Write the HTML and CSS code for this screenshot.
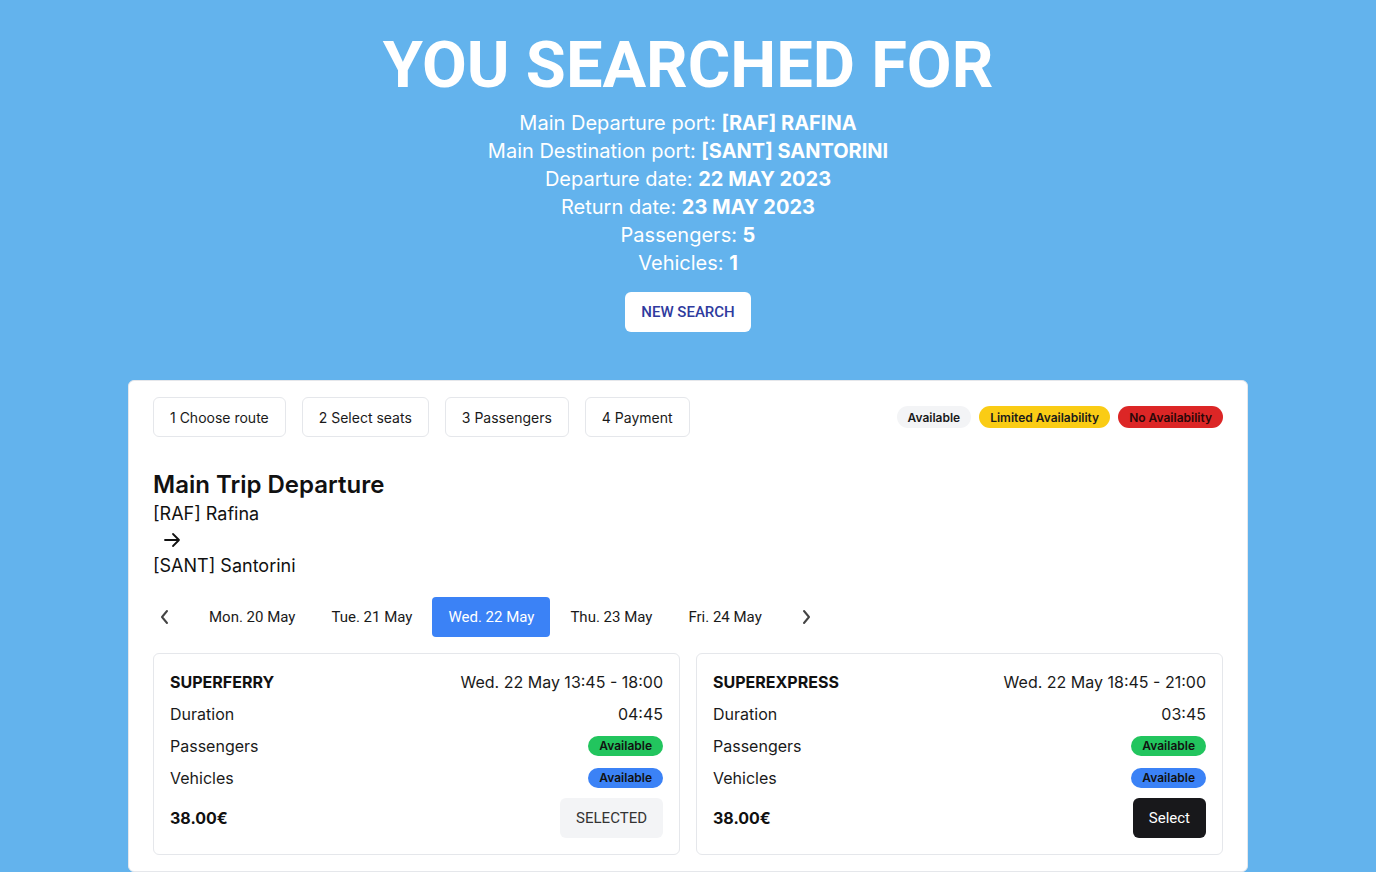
FILE: index.html
```html
<!DOCTYPE html>
<html lang="en">
<head>
<meta charset="utf-8">
<title>Search results</title>
<link rel="stylesheet" href="styles.css">
</head>
<body>
<header class="hero">
  <h1 class="hero-title">YOU SEARCHED FOR</h1>
  <div class="summary">
    <p>Main Departure port: <b>[RAF] RAFINA</b></p>
    <p>Main Destination port: <b>[SANT] SANTORINI</b></p>
    <p>Departure date: <b>22 MAY 2023</b></p>
    <p>Return date: <b>23 MAY 2023</b></p>
    <p>Passengers: <b>5</b></p>
    <p>Vehicles: <b>1</b></p>
  </div>
  <button class="new-search">NEW SEARCH</button>
</header>

<main class="panel">
  <div class="toolbar">
    <nav class="steps">
      <button class="step">1 Choose route</button>
      <button class="step">2 Select seats</button>
      <button class="step">3 Passengers</button>
      <button class="step">4 Payment</button>
    </nav>
    <div class="legend">
      <span class="tag tag-gray">Available</span>
      <span class="tag tag-yellow">Limited Availability</span>
      <span class="tag tag-red">No Availability</span>
    </div>
  </div>

  <section class="trip">
    <h2 class="trip-title">Main Trip Departure</h2>
    <div class="port">[RAF] Rafina</div>
    <div class="arrow">
      <svg width="18" height="18" viewBox="0 0 18 18" fill="none" stroke="#111" stroke-width="1.8" stroke-linecap="round" stroke-linejoin="round"><path d="M2 9h14M10 3l6 6-6 6"/></svg>
    </div>
    <div class="port">[SANT] Santorini</div>
  </section>

  <div class="dates">
    <button class="nav-btn" aria-label="previous">
      <svg width="10" height="16" viewBox="0 0 10 16" fill="none" stroke="#444" stroke-width="2" stroke-linecap="round" stroke-linejoin="round"><path d="M7 2L2 8l5 6"/></svg>
    </button>
    <button class="date">Mon. 20 May</button>
    <button class="date">Tue. 21 May</button>
    <button class="date active">Wed. 22 May</button>
    <button class="date">Thu. 23 May</button>
    <button class="date">Fri. 24 May</button>
    <button class="nav-btn" aria-label="next">
      <svg width="10" height="16" viewBox="0 0 10 16" fill="none" stroke="#444" stroke-width="2" stroke-linecap="round" stroke-linejoin="round"><path d="M3 2l5 6-5 6"/></svg>
    </button>
  </div>

  <div class="results">
    <article class="result">
      <div class="row"><span class="ship">SUPERFERRY</span><span>Wed. 22 May 13:45 - 18:00</span></div>
      <div class="row"><span>Duration</span><span>04:45</span></div>
      <div class="row"><span>Passengers</span><span class="pill pill-green">Available</span></div>
      <div class="row"><span>Vehicles</span><span class="pill pill-blue">Available</span></div>
      <div class="row row-foot"><span class="price">38.00€</span><button class="btn btn-selected">SELECTED</button></div>
    </article>
    <article class="result">
      <div class="row"><span class="ship">SUPEREXPRESS</span><span>Wed. 22 May 18:45 - 21:00</span></div>
      <div class="row"><span>Duration</span><span>03:45</span></div>
      <div class="row"><span>Passengers</span><span class="pill pill-green">Available</span></div>
      <div class="row"><span>Vehicles</span><span class="pill pill-blue">Available</span></div>
      <div class="row row-foot"><span class="price">38.00€</span><button class="btn btn-select">Select</button></div>
    </article>
  </div>
</main>
</body>
</html>
```

FILE: styles.css
```css
* { box-sizing: border-box; }

html, body {
  margin: 0;
  padding: 0;
  background: #63b3ed;
  font-family: "Inter", "Liberation Sans", sans-serif;
  color: #111;
}

body {
  padding: 29px 0 0;
  overflow: hidden;
  height: 872px;
}

button {
  font-family: inherit;
  cursor: pointer;
}

.hero {
  display: flex;
  flex-direction: column;
  align-items: center;
  color: #fff;
  text-align: center;
}

.hero-title {
  margin: 0 0 8px;
  font-family: "Roboto", "Liberation Sans", sans-serif;
  font-weight: 700;
  font-size: 65px;
  line-height: 72px;
  letter-spacing: 0;
}

.summary p {
  margin: 0;
  font-size: 20px;
  line-height: 28px;
  font-weight: 400;
}

.summary b { font-weight: 700; }

.new-search {
  margin-top: 15px;
  height: 40px;
  padding: 0 16px;
  border: none;
  border-radius: 6px;
  background: #fff;
  color: #2f3b9e;
  font-family: "Roboto", "Liberation Sans", sans-serif;
  font-size: 15px;
  font-weight: 500;
}

.panel {
  width: 1120px;
  margin: 48px auto 0;
  background: #fff;
  border: 1px solid #e5e7eb;
  border-radius: 6px;
  padding: 16px 24px 16px;
}

.toolbar {
  display: flex;
  justify-content: space-between;
  align-items: center;
}

.steps {
  display: flex;
  gap: 16px;
}

.step {
  height: 40px;
  padding: 0 16px;
  background: #fff;
  border: 1px solid #e5e7eb;
  border-radius: 6px;
  font-size: 14px;
  color: #1a1a1a;
}

.legend {
  display: flex;
  gap: 8px;
}

.tag {
  display: inline-flex;
  align-items: center;
  height: 22px;
  padding: 0 11px;
  border-radius: 11px;
  font-size: 12px;
  font-weight: 600;
  color: #1a1a1a;
}

.tag-gray { background: #f3f4f6; }
.tag-yellow { background: #facc15; }
.tag-red { background: #dc2626; color: #2a0808; }

.trip {
  margin-top: 32px;
}

.trip-title {
  margin: 0;
  font-size: 24px;
  line-height: 32px;
  font-weight: 600;
}

.port {
  font-size: 18px;
  line-height: 26px;
}

.arrow {
  height: 26px;
  display: flex;
  align-items: center;
  padding-left: 10px;
}

.dates {
  margin-top: 18px;
  display: flex;
  align-items: center;
  gap: 4px;
}

.nav-btn {
  width: 24px;
  height: 40px;
  padding: 0;
  border: none;
  background: transparent;
  display: flex;
  align-items: center;
  justify-content: center;
}

.nav-btn:first-child { margin-right: 12px; }
.nav-btn:last-child { margin-left: 12px; }

.date {
  height: 40px;
  padding: 0 16px;
  border: none;
  border-radius: 4px;
  background: transparent;
  font-family: "Roboto", "Liberation Sans", sans-serif;
  font-size: 15px;
  color: #1a1a1a;
}

.date.active {
  background: #3b82f6;
  color: #fff;
}

.results {
  margin-top: 16px;
  display: grid;
  grid-template-columns: 1fr 1fr;
  gap: 16px;
}

.result {
  border: 1px solid #e5e7eb;
  border-radius: 6px;
  padding: 16px;
  display: flex;
  flex-direction: column;
  gap: 8px;
}

.row {
  display: flex;
  justify-content: space-between;
  align-items: center;
  font-size: 16px;
  line-height: 24px;
  color: #1a1a1a;
}

.ship { font-weight: 700; color: #111; }

.pill {
  display: inline-flex;
  align-items: center;
  height: 20px;
  padding: 0 11px;
  border-radius: 10px;
  font-size: 12px;
  line-height: 20px;
  font-weight: 600;
  color: #111;
}

.pill-green { background: #22c55e; }
.pill-blue { background: #3b82f6; }

.price { font-weight: 700; color: #111; }

.btn {
  height: 40px;
  padding: 0 16px;
  border: none;
  border-radius: 6px;
  font-family: "Roboto", "Liberation Sans", sans-serif;
  font-size: 15px;
}

.btn-selected {
  background: #f3f4f6;
  color: #333;
}

.btn-select {
  background: #18181b;
  color: #fff;
}
```
